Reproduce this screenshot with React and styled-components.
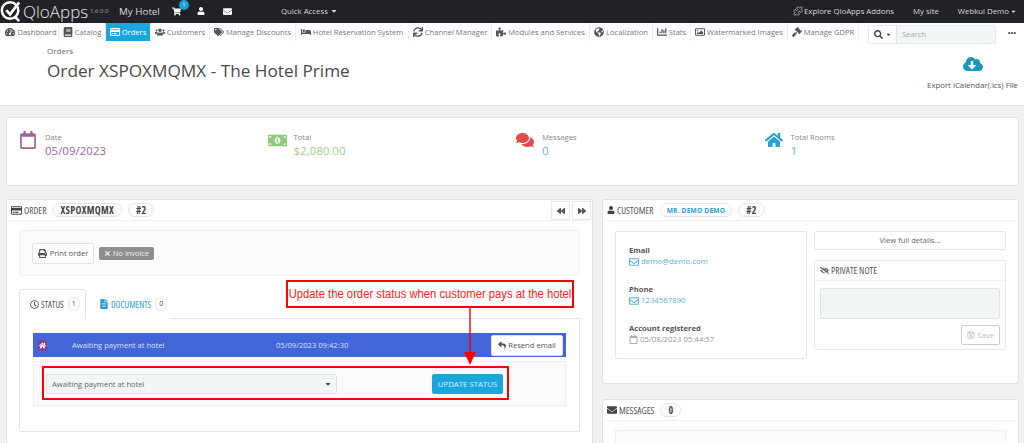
import React from 'react'
import styled, { createGlobalStyle } from 'styled-components'
import {
  FaTachometerAlt, FaBook, FaRegCreditCard, FaUsers, FaTags, FaBed, FaSync, FaPuzzlePiece,
  FaGlobeAmericas, FaChartBar, FaRegImage, FaGavel, FaSearch, FaCaretDown, FaEllipsisH,
  FaCloudDownloadAlt, FaRegCalendar, FaMoneyBillAlt, FaComments, FaHome, FaShoppingCart,
  FaUser, FaEnvelope, FaRegEnvelope, FaBackward, FaForward, FaPrint, FaTimes, FaRegClock,
  FaFileAlt, FaReply, FaEyeSlash, FaRegSave,
} from 'react-icons/fa'
import { Puzzle } from 'lucide-react'

const Global = createGlobalStyle`
  * { box-sizing: border-box; }
  html, body { margin: 0; padding: 0; background: #eff1f2; }
  body { font-family: "Open Sans", "Liberation Sans", sans-serif; color: #555; }
`

const menu = [
  [FaTachometerAlt, 'Dashboard', 55],
  [FaBook, 'Catalog', 47],
  [FaRegCreditCard, 'Orders', 45],
  [FaUsers, 'Customers', 59],
  [FaTags, 'Manage Discounts', 86],
  [FaBed, 'Hotel Reservation System', 113],
  [FaSync, 'Channel Manager', 83],
  [FaPuzzlePiece, 'Modules and Services', 98],
  [FaGlobeAmericas, 'Localization', 63],
  [FaChartBar, 'Stats', 38],
  [FaRegImage, 'Watermarked Images', 97],
  [FaGavel, 'Manage GDPR', 71],
]

const App = () => {
  return (
    <Page>
      <Global />
      <TopBar>
        <Logo viewBox="0 0 24 24">
          <circle cx="10.5" cy="11" r="8.6" fill="none" stroke="#fff" strokeWidth="2.6" />
          <path d="M6.5 10.5l4 4.5L20 2.5" fill="none" stroke="#fff" strokeWidth="2.8" />
          <path d="M16 18l4 4" stroke="#fff" strokeWidth="2.8" />
        </Logo>
        <Brand>QloApps</Brand>
        <Version>1.6.0.0</Version>
        <ShopName>My Hotel</ShopName>
        <CartIcon>
          <FaShoppingCart size={9} />
          <Bubble>1</Bubble>
        </CartIcon>
        <TopIcon $right={18}><FaUser size={8} /></TopIcon>
        <TopIcon $right={19}><FaEnvelope size={9} /></TopIcon>
        <QuickAccess>Quick Access <FaCaretDown size={8} /></QuickAccess>
        <TopRight>
          <TopLink><Puzzle size={10} strokeWidth={1.6} /> Explore QloApps Addons</TopLink>
          <TopLink>My site</TopLink>
          <TopLink>Webkul Demo <FaCaretDown size={7} /></TopLink>
        </TopRight>
      </TopBar>

      <MenuBar>
        <MenuList>
          {menu.map(([Icon, label, width], i) => (
            <MenuItem key={label} $active={i === 2} $width={width}>
              <Icon size={10} />
              {label}
            </MenuItem>
          ))}
        </MenuList>
        <SearchBox>
          <SearchType><FaSearch size={9} /><FaCaretDown size={7} /></SearchType>
          <SearchInput>Search</SearchInput>
        </SearchBox>
        <MoreDots><FaEllipsisH size={8} /></MoreDots>
      </MenuBar>

      <PageHead>
        <div>
          <Crumb>Orders</Crumb>
          <Title>Order XSPOXMQMX - The Hotel Prime</Title>
        </div>
        <ExportLink>
          <FaCloudDownloadAlt size={20} color="#1f97b9" />
          <span>Export iCalendar(.ics) File</span>
        </ExportLink>
      </PageHead>

      <Content>
        <KpiCard>
          <Kpi>
            <KpiIcon $color="#a0639d"><FaRegCalendar size={18} /></KpiIcon>
            <div><KpiLabel>Date</KpiLabel><KpiValue $color="#a0639d">05/09/2023</KpiValue></div>
          </Kpi>
          <Kpi>
            <KpiIcon $color="#8fca7a"><FaMoneyBillAlt size={19} /></KpiIcon>
            <div><KpiLabel>Total</KpiLabel><KpiValue $color="#9fd08f">$2,080.00</KpiValue></div>
          </Kpi>
          <Kpi>
            <KpiIcon $color="#e04b4b"><FaComments size={18} /></KpiIcon>
            <div><KpiLabel>Messages</KpiLabel><KpiValue $color="#5bb3d6">0</KpiValue></div>
          </Kpi>
          <Kpi>
            <KpiIcon $color="#2a9fd6"><FaHome size={18} /></KpiIcon>
            <div><KpiLabel>Total Rooms</KpiLabel><KpiValue $color="#5bb3d6">1</KpiValue></div>
          </Kpi>
        </KpiCard>

        <Columns>
          <OrderPanel>
            <PanelHead>
              <FaRegCreditCard size={11} color="#444" />
              <HeadText>ORDER</HeadText>
              <Pill>XSPOXMQMX</Pill>
              <Pill>#2</Pill>
              <NavButtons>
                <NavButton><FaBackward size={8} /></NavButton>
                <NavButton><FaForward size={8} /></NavButton>
              </NavButtons>
            </PanelHead>
            <OrderBody>
              <Well>
                <PrintButton><FaPrint size={9} /> Print order</PrintButton>
                <NoInvoice><FaTimes size={7} /> No invoice</NoInvoice>
              </Well>
              <Tabs>
                <Tab $active><FaRegClock size={9} /><TabText>STATUS</TabText><TabCount>1</TabCount></Tab>
                <Tab><FaFileAlt size={10} color="#2a9fd6" /><TabText $blue>DOCUMENTS</TabText><TabCount>0</TabCount></Tab>
              </Tabs>
              <TabContent>
                <StatusBar>
                  <StatusIcon><FaHome size={7} /></StatusIcon>
                  <StatusName>Awaiting payment at hotel</StatusName>
                  <StatusDate>05/09/2023 09:42:30</StatusDate>
                  <ResendButton><FaReply size={8} /> Resend email</ResendButton>
                </StatusBar>
                <StatusForm>
                  <SelectBox>Awaiting payment at hotel<FaCaretDown size={8} color="#444" /></SelectBox>
                  <UpdateButton>UPDATE STATUS</UpdateButton>
                </StatusForm>
              </TabContent>
            </OrderBody>
            <NoteBox><NoteText>Update the order status when customer pays at the hotel</NoteText></NoteBox>
            <FormHighlight />
            <Arrow viewBox="0 0 14 58">
              <path d="M7 0V46" stroke="#f00" strokeWidth="1.4" />
              <path d="M1 45H13L7 58Z" fill="#f00" />
            </Arrow>
          </OrderPanel>

          <SideColumn>
            <CustomerPanel>
              <PanelHead>
                <FaUser size={8} color="#444" />
                <HeadText>CUSTOMER</HeadText>
                <Pill $blue>MR. DEMO DEMO</Pill>
                <Pill>#2</Pill>
              </PanelHead>
              <CustomerBody>
                <InfoCard>
                  <InfoLabel>Email</InfoLabel>
                  <InfoLink><FaRegEnvelope size={10} /> demo@demo.com</InfoLink>
                  <InfoLabel>Phone</InfoLabel>
                  <InfoLink><FaRegEnvelope size={10} /> 1234567890</InfoLink>
                  <InfoLabel>Account registered</InfoLabel>
                  <InfoDate><FaRegCalendar size={9} /> 05/08/2023 05:44:57</InfoDate>
                </InfoCard>
                <NoteColumn>
                  <ViewDetails>View full details...</ViewDetails>
                  <NoteCard>
                    <NoteHead><FaEyeSlash size={9} /><HeadText>PRIVATE NOTE</HeadText></NoteHead>
                    <NoteBody>
                      <NoteArea />
                      <SaveButton><FaRegSave size={8} /> Save</SaveButton>
                    </NoteBody>
                  </NoteCard>
                </NoteColumn>
              </CustomerBody>
            </CustomerPanel>
            <MessagesPanel>
              <PanelHead>
                <FaEnvelope size={10} color="#444" />
                <HeadText>MESSAGES</HeadText>
                <Pill>0</Pill>
              </PanelHead>
              <MessagesWell><MessageField /></MessagesWell>
            </MessagesPanel>
          </SideColumn>
        </Columns>
      </Content>
    </Page>
  )
}

export default App

const narrow = `
  font-family: "Open Sans", "Liberation Sans", sans-serif;
  font-stretch: 75%;
`

const Page = styled.div`
  width: 1024px;
  height: 443px;
  overflow: hidden;
  background: #eff1f2;
`

const TopBar = styled.div`
  height: 23px;
  padding-bottom: 1px;
  background: #202226;
  color: #d8d8d8;
  display: flex;
  align-items: center;
  font-size: 9px;
`
const Logo = styled.svg`
  width: 23px;
  height: 23px;
  flex: none;
`
const Brand = styled.span`
  font-size: 17px;
  font-weight: 300;
  color: #e6e6e6;
  width: 64px;
`
const Version = styled.span`
  font-size: 6px;
  margin-left: 3px;
  width: 24px;
  color: #aaa;
`
const ShopName = styled.span`
  margin-left: 5px;
  font-size: 9.8px;
  width: 53px;
`
const CartIcon = styled.span`
  position: relative;
  display: flex;
  color: #fff;
  width: 25px;
`
const Bubble = styled.span`
  position: absolute;
  left: 7px;
  top: -7px;
  width: 10px;
  height: 10px;
  border-radius: 50%;
  background: #1ba2dc;
  color: #fff;
  font-size: 5px;
  text-align: center;
  line-height: 10px;
`
const TopIcon = styled.span`
  display: flex;
  color: #fff;
  margin-right: ${p => p.$right}px;
`
const QuickAccess = styled.span`
  margin-left: 30px;
  font-size: 7.8px;
  display: flex;
  align-items: center;
  gap: 2px;
`
const TopRight = styled.div`
  margin-left: auto;
  padding-right: 7px;
  display: flex;
  gap: 19px;
  font-size: 7.8px;
`
const TopLink = styled.span`
  display: flex;
  align-items: center;
  gap: 1px;
`

const MenuBar = styled.div`
  height: 21px;
  background: #fff;
  display: flex;
  align-items: flex-start;
`
const MenuList = styled.div`
  display: flex;
  padding-left: 4px;
  height: 18px;
  width: 868px;
`
const MenuItem = styled.div`
  width: ${p => p.$width}px;
  flex: none;
  height: 18px;
  display: flex;
  align-items: center;
  justify-content: center;
  gap: 2px;
  font-size: 7.6px;
  white-space: nowrap;
  color: ${p => (p.$active ? '#fff' : '#777')};
  background: ${p => (p.$active ? '#1ba5df' : '#fff')};
  border-right: 1px solid #eee;
  svg { color: ${p => (p.$active ? '#fff' : '#555')}; flex: none; }
`
const SearchBox = styled.div`
  display: flex;
  width: 128px;
  height: 19px;
  margin-top: 2px;
  border: 1px solid #e6e9ec;
  border-radius: 2px;
`
const SearchType = styled.div`
  width: 27px;
  display: flex;
  align-items: center;
  justify-content: center;
  gap: 2px;
  color: #444;
`
const SearchInput = styled.div`
  flex: 1;
  background: #f3f6f7;
  border-left: 1px solid #dfe5e8;
  padding-left: 5px;
  font-size: 7.6px;
  line-height: 17px;
  color: #aaa;
`
const MoreDots = styled.div`
  margin: 6px 0 0 12px;
  color: #555;
  display: flex;
`

const PageHead = styled.div`
  height: 62px;
  background: #fff;
  border-bottom: 1px solid #dcdfe1;
  display: flex;
  justify-content: space-between;
  padding: 1px 6px 0 47px;
`
const Crumb = styled.div`
  font-size: 8px;
  line-height: 12px;
  color: #666;
`
const Title = styled.h1`
  margin: 2px 0 0;
  font-size: 17.2px;
  font-weight: 400;
  line-height: 24px;
  color: #4a4a4a;
`
const ExportLink = styled.div`
  display: flex;
  flex-direction: column;
  align-items: center;
  font-size: 7.8px;
  color: #555;
  padding-top: 9px;
  gap: 6px;
`

const Content = styled.div`
  padding: 11px 5px 0 6px;
`
const KpiCard = styled.div`
  height: 69px;
  background: #fff;
  border: 1px solid #dfe2e4;
  border-radius: 3px;
  display: grid;
  grid-template-columns: repeat(4, 248.5px);
  padding: 13px 0 0 12px;
`
const Kpi = styled.div`
  display: flex;
  align-items: flex-start;
`
const KpiIcon = styled.div`
  width: 26px;
  color: ${p => p.$color};
  display: flex;
`
const KpiLabel = styled.div`
  font-size: 7.6px;
  line-height: 12px;
  color: #888;
`
const KpiValue = styled.div`
  font-size: 11.5px;
  line-height: 16px;
  color: ${p => p.$color};
`

const Columns = styled.div`
  display: flex;
  gap: 9px;
  margin-top: 13px;
  align-items: flex-start;
`
const Panel = styled.div`
  background: #fff;
  border: 1px solid #dfe2e4;
  border-radius: 3px;
`
const OrderPanel = styled(Panel)`
  position: relative;
  width: 587px;
  height: 300px;
`
const SideColumn = styled.div`
  width: 417px;
  display: flex;
  flex-direction: column;
  gap: 15px;
`
const CustomerPanel = styled(Panel)`
  height: 185px;
`
const MessagesPanel = styled(Panel)`
  height: 80px;
`
const PanelHead = styled.div`
  height: 21px;
  margin: 0 3px;
  padding-left: 1px;
  display: flex;
  align-items: center;
  gap: 2px;
  border-bottom: 1px solid #eef0f1;
  position: relative;
`
const HeadText = styled.span`
  ${narrow}
  font-size: 9.5px;
  color: #555;
`
const Pill = styled.span`
  height: 14px;
  margin-left: 4px;
  padding: 0 ${p => (p.$blue ? '6px' : '7px')};
  border: 1px solid #e2e5e7;
  border-radius: 8px;
  display: flex;
  align-items: center;
  ${p => (p.$blue ? '' : narrow)}
  font-weight: 700;
  font-size: ${p => (p.$blue ? '6.6px' : '10px')};
  letter-spacing: ${p => (p.$blue ? '0.2px' : '0.3px')};
  color: ${p => (p.$blue ? '#2a9fd6' : '#444')};
`
const NavButtons = styled.div`
  position: absolute;
  right: -2px;
  top: 1px;
  display: flex;
  gap: 2px;
`
const NavButton = styled.div`
  width: 19px;
  height: 19px;
  border: 1px solid #e6e8ea;
  background: #fff;
  display: flex;
  align-items: center;
  justify-content: center;
  color: #555;
`
const OrderBody = styled.div`
  padding: 9px 12px 0;
`
const Well = styled.div`
  height: 46px;
  background: #fafbfc;
  border: 1px solid #eef0f2;
  border-radius: 2px;
  display: flex;
  align-items: center;
  padding-left: 12px;
  gap: 5px;
`
const PrintButton = styled.div`
  width: 62px;
  height: 21px;
  background: #fff;
  border: 1px solid #e2e4e6;
  border-radius: 2px;
  font-size: 7.6px;
  display: flex;
  align-items: center;
  justify-content: center;
  gap: 3px;
  color: #555;
`
const NoInvoice = styled.div`
  width: 55px;
  height: 13px;
  background: #8f8f8f;
  border-radius: 2px;
  font-size: 7.4px;
  color: #eee;
  display: flex;
  align-items: center;
  justify-content: center;
  gap: 2px;
`
const Tabs = styled.div`
  display: flex;
  margin-top: 13px;
  position: relative;
  z-index: 1;
`
const Tab = styled.div`
  height: 30px;
  width: ${p => (p.$active ? '67px' : '84px')};
  padding-left: ${p => (p.$active ? '10px' : '12px')};
  display: flex;
  align-items: center;
  gap: 2px;
  background: #fff;
  border: ${p => (p.$active ? '1px solid #e2e5e7' : '1px solid transparent')};
  border-bottom-color: ${p => (p.$active ? '#fff' : 'transparent')};
  border-radius: 3px 3px 0 0;
  color: #555;
`
const TabText = styled.span`
  ${narrow}
  font-size: 9px;
  color: ${p => (p.$blue ? '#2a9fd6' : '#555')};
`
const TabCount = styled.span`
  width: 12px;
  height: 14px;
  margin-left: 2px;
  border: 1px solid #e6e8ea;
  border-radius: 7px;
  font-size: 7px;
  text-align: center;
  line-height: 12px;
`
const TabContent = styled.div`
  height: 114px;
  margin-top: -1px;
  border: 1px solid #e2e5e7;
  border-radius: 0 0 2px 2px;
  padding: 14px 13px 0;
`
const StatusBar = styled.div`
  height: 24px;
  background: #4266d8;
  display: flex;
  align-items: center;
  padding-left: 5px;
  color: #d9e0f7;
  font-size: 7.6px;
`
const StatusIcon = styled.div`
  width: 9px;
  height: 11px;
  background: #8a3f93;
  color: #fff;
  border-radius: 2px;
  display: flex;
  align-items: center;
  justify-content: center;
`
const StatusName = styled.span`
  margin-left: 25px;
  width: 204px;
`
const StatusDate = styled.span`
  width: 215px;
`
const ResendButton = styled.div`
  width: 72px;
  height: 21px;
  background: #fff;
  border: 1px solid #d9dce0;
  border-radius: 2px;
  color: #555;
  display: flex;
  align-items: center;
  justify-content: center;
  gap: 2px;
  font-size: 7.6px;
`
const StatusForm = styled.div`
  height: 45px;
  margin-top: 4px;
  background: #fafbfc;
  border: 1px solid #eceff1;
  display: flex;
  align-items: flex-start;
  padding: 12px 0 0 12px;
`
const SelectBox = styled.div`
  width: 291px;
  height: 20px;
  background: #f3f6f7;
  border: 1px solid #dfe4e6;
  border-radius: 2px;
  font-size: 7.6px;
  color: #666;
  display: flex;
  align-items: center;
  justify-content: space-between;
  padding: 0 4px 0 5px;
`
const UpdateButton = styled.div`
  width: 71px;
  height: 20px;
  margin-left: 95px;
  background: #1ba5df;
  border-radius: 2px;
  color: #d8f0fa;
  font-size: 7.8px;
  display: flex;
  align-items: center;
  justify-content: center;
`
const NoteBox = styled.div`
  position: absolute;
  left: 279px;
  top: 80px;
  width: 288px;
  height: 28px;
  border: 2px solid #f00;
  background: #fff;
  display: flex;
  align-items: center;
  justify-content: center;
`
const NoteText = styled.span`
  flex: none;
  color: #f22;
  font-family: "Liberation Sans", sans-serif;
  font-size: 12.5px;
  white-space: nowrap;
  transform: scaleX(0.9);
`
const FormHighlight = styled.div`
  position: absolute;
  left: 35px;
  top: 166px;
  width: 467px;
  height: 34px;
  border: 2px solid #f00;
`
const Arrow = styled.svg`
  position: absolute;
  left: 456px;
  top: 107px;
  width: 14px;
  height: 58px;
`

const CustomerBody = styled.div`
  display: flex;
  gap: 7px;
  padding: 10px 12px 0;
`
const InfoCard = styled.div`
  width: 192px;
  height: 128px;
  border: 1px solid #e6e8ea;
  border-radius: 2px;
  padding: 13px 13px 0;
`
const InfoLabel = styled.div`
  font-size: 7.6px;
  font-weight: 700;
  line-height: 11px;
  color: #555;
`
const InfoLink = styled.div`
  font-size: 7.8px;
  line-height: 11px;
  margin-bottom: 17px;
  color: #56b4d3;
  display: flex;
  align-items: center;
  gap: 2px;
`
const InfoDate = styled(InfoLink)`
  color: #999;
`
const NoteColumn = styled.div`
  width: 192px;
  display: flex;
  flex-direction: column;
  gap: 10px;
`
const ViewDetails = styled.div`
  height: 19px;
  border: 1px solid #e6e8ea;
  border-radius: 2px;
  font-size: 7.6px;
  text-align: center;
  line-height: 17px;
  color: #666;
`
const NoteCard = styled.div`
  height: 90px;
  border: 1px solid #e6e8ea;
  border-radius: 3px;
`
const NoteHead = styled.div`
  height: 20px;
  padding-left: 5px;
  display: flex;
  align-items: center;
  gap: 2px;
  border-bottom: 1px solid #eef0f1;
  color: #555;
`
const NoteBody = styled.div`
  padding: 7px 5px 0;
  display: flex;
  flex-direction: column;
  align-items: flex-end;
  gap: 6px;
`
const NoteArea = styled.div`
  width: 100%;
  height: 31px;
  background: #f3f6f7;
  border: 1px solid #dfe4e6;
  border-radius: 2px;
`
const SaveButton = styled.div`
  width: 39px;
  height: 20px;
  border: 1px solid #ccc;
  border-radius: 2px;
  font-size: 7.6px;
  color: #bbb;
  display: flex;
  align-items: center;
  justify-content: center;
  gap: 2px;
`
const MessagesWell = styled.div`
  margin: 9px 12px 0;
  height: 50px;
  background: #fafbfc;
  border: 1px solid #eef0f2;
  padding-top: 12px;
  display: flex;
  justify-content: center;
`
const MessageField = styled.div`
  width: 209px;
  height: 20px;
  border: 1px solid #dfe4e6;
`
